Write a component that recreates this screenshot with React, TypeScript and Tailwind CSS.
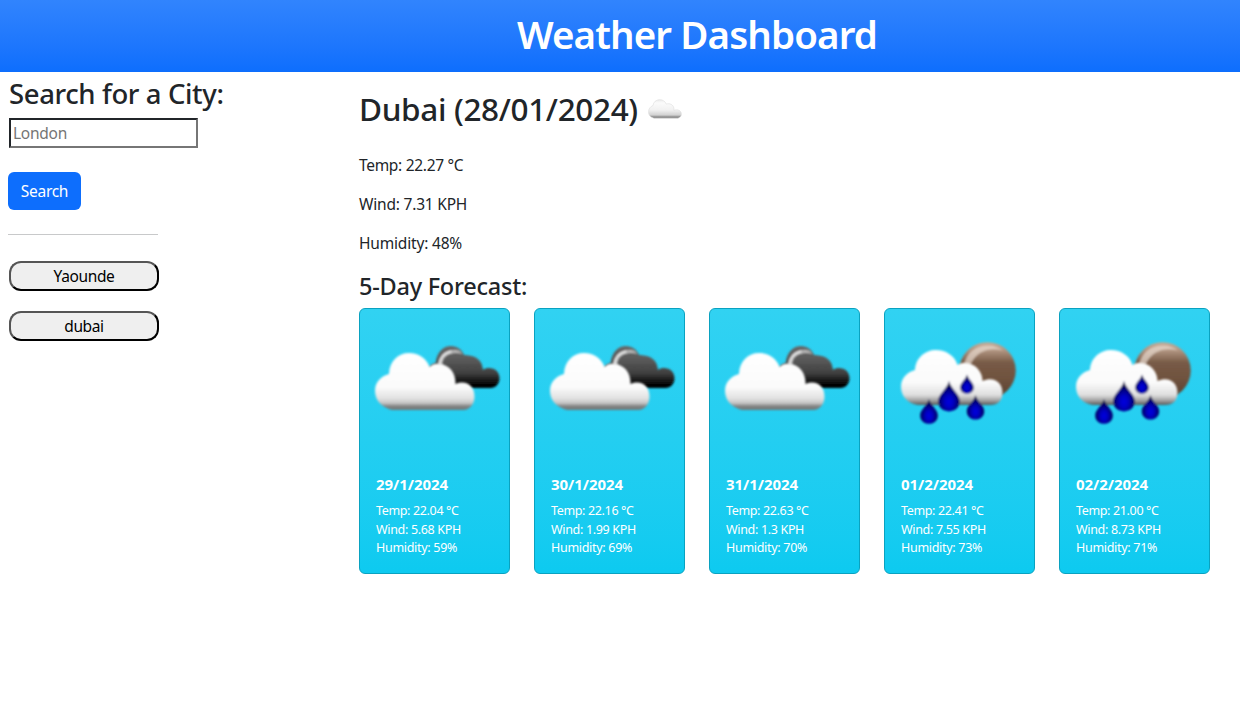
type Sky = "clouds" | "rain";

interface Day {
  date: string;
  sky: Sky;
  temp: string;
  wind: string;
  humidity: string;
}

const days: Day[] = [
  { date: "29/1/2024", sky: "clouds", temp: "22.04", wind: "5.68", humidity: "59" },
  { date: "30/1/2024", sky: "clouds", temp: "22.16", wind: "1.99", humidity: "69" },
  { date: "31/1/2024", sky: "clouds", temp: "22.63", wind: "1.3", humidity: "70" },
  { date: "01/2/2024", sky: "rain", temp: "22.41", wind: "7.55", humidity: "73" },
  { date: "02/2/2024", sky: "rain", temp: "21.00", wind: "8.73", humidity: "71" },
];

const cities = ["Yaounde", "dubai"];

function SmallCloud() {
  return (
    <svg className="ml-[10px] h-[20px] w-[34px]" viewBox="0 0 34 20">
      <defs>
        <linearGradient id="small-cloud" x1="0" y1="0" x2="0" y2="20" gradientUnits="userSpaceOnUse">
          <stop offset="0" stopColor="#e9e9e9" />
          <stop offset="0.2" stopColor="#fbfbfb" />
          <stop offset="0.55" stopColor="#f1f1f1" />
          <stop offset="0.8" stopColor="#d2d2d2" />
          <stop offset="0.9" stopColor="#8b8b8b" />
          <stop offset="1" stopColor="#777777" />
        </linearGradient>
      </defs>
      <path
        d="M6 19.2C2.6 18.5.5 16 .5 13 .5 9.8 2.3 7.5 5 6.5 5.3 3 8.2.7 11.7.7c3.2 0 5.6 1.7 6.5 4.4 3.6-1.2 7 .6 7.7 4 .1.9 0 1.6-.1 2.2 4-1.4 7.6.3 7.600 3.700 0 2.200-1.300 3.600-3.400 4.200Z"
        fill="url(#small-cloud)"
        stroke="#dedede"
        strokeWidth="0.6"
      />
    </svg>
  );
}

function CloudsIcon() {
  return (
    <svg className="h-[150px] w-full" viewBox="0 0 149 150">
      <defs>
        <linearGradient id="dark-cloud" x1="0" y1="37" x2="0" y2="79" gradientUnits="userSpaceOnUse">
          <stop offset="0" stopColor="#686868" />
          <stop offset="0.35" stopColor="#585858" />
          <stop offset="0.65" stopColor="#3f3f3f" />
          <stop offset="0.9" stopColor="#050505" />
          <stop offset="1" stopColor="#000000" />
        </linearGradient>
        <linearGradient id="white-cloud" x1="0" y1="44" x2="0" y2="101" gradientUnits="userSpaceOnUse">
          <stop offset="0" stopColor="#ffffff" />
          <stop offset="0.6" stopColor="#fbfbfb" />
          <stop offset="0.8" stopColor="#e0e0e0" />
          <stop offset="0.88" stopColor="#c4c4c4" />
          <stop offset="0.93" stopColor="#858585" />
          <stop offset="1" stopColor="#6f7577" />
        </linearGradient>
        <filter id="soft-clouds" x="-5%" y="-5%" width="110%" height="110%">
          <feGaussianBlur stdDeviation="0.85" />
        </filter>
      </defs>
      <g filter="url(#soft-clouds)">
        <path
          d="M68 60c2-4 5-5.5 7.500-6C77 43 83 37 91 37c6 0 11 3.500 13 9 8 .5 18 2 19 15 1.500-1.500 4-2 6-2 6 0 10.500 4 10.500 10 0 6-4 10-9 10H90L69 62Z"
          fill="url(#dark-cloud)"
        />
        <path d="M78.500 57c.5-10 8-16.500 17-16 3 0 5 1.500 7 4-8-2.500-16 0-19 5-1.500 3-1.500 6-1 10Z" fill="#b5b5b5" />
        <path d="M79.500 55c1-7 5-11 11-12.500" fill="none" stroke="#ebebeb" strokeWidth="2" strokeLinecap="round" />
      </g>
      <g filter="url(#soft-clouds)">
        <path
          d="M32 101c-9-2-17-9-17-19 0-9 6-15 14-17C29.500 52 38 44 49 44c10 0 18 6 20.500 14 3-3 6-3.500 9-3 10 0 17.500 8 17 20 11-4.500 19 2 19 12.500 0 8-5 13.500-11 13.500Z"
          fill="url(#white-cloud)"
        />
      </g>
    </svg>
  );
}

function Drop({ x, y, scale }: { x: number; y: number; scale: number }) {
  return (
    <path
      transform={`translate(${x} ${y}) scale(${scale})`}
      d="M0 0C2 8 10.500 12.500 10.500 19.500 10.500 25.500 6 29.500 0 29.500S-10.500 25.500-10.500 19.500C-10.500 12.500-2 8 0 0Z"
      fill="url(#drop)"
    />
  );
}

function RainIcon() {
  return (
    <svg className="h-[150px] w-full" viewBox="0 0 149 150">
      <defs>
        <linearGradient id="moon" x1="0" y1="33" x2="0" y2="90" gradientUnits="userSpaceOnUse">
          <stop offset="0" stopColor="#c9ad98" />
          <stop offset="0.15" stopColor="#b09480" />
          <stop offset="0.36" stopColor="#785b47" />
          <stop offset="0.65" stopColor="#6f523e" />
          <stop offset="1" stopColor="#57402f" />
        </linearGradient>
        <linearGradient id="rain-cloud" x1="0" y1="41" x2="0" y2="96" gradientUnits="userSpaceOnUse">
          <stop offset="0" stopColor="#ffffff" />
          <stop offset="0.6" stopColor="#fafafa" />
          <stop offset="0.82" stopColor="#dedede" />
          <stop offset="0.92" stopColor="#a0a0a0" />
          <stop offset="1" stopColor="#555555" />
        </linearGradient>
        <radialGradient id="drop" cx="0.5" cy="0.68" r="0.55">
          <stop offset="0" stopColor="#0000e0" />
          <stop offset="0.35" stopColor="#0000c4" />
          <stop offset="0.75" stopColor="#000078" />
          <stop offset="1" stopColor="#000048" />
        </radialGradient>
        <filter id="soft-rain" x="-5%" y="-5%" width="110%" height="110%">
          <feGaussianBlur stdDeviation="0.85" />
        </filter>
      </defs>
      <g filter="url(#soft-rain)">
        <circle cx="102.5" cy="61.5" r="28.3" fill="url(#moon)" />
        <path d="M79 56C82 43 91 36.500 103 36.500c6 0 11 2 15 5-12-3-26-1-33 15Z" fill="#eadbd0" fillOpacity="0.7" />
      </g>
      <g filter="url(#soft-rain)">
        <path
          d="M33 96c-10-1-17-9-17-18 0-9 6-15 14-17C30.500 49 40 41 51 41c10 0 19 6 21.500 15 3-2 5-2 8-2 9 0 17 8 17 18 11-5 20 1 20 12 0 8-5 12-12 12Z"
          fill="url(#rain-cloud)"
        />
        <Drop x={44} y={90} scale={0.84} />
        <Drop x={64} y={72} scale={1.03} />
        <Drop x={82} y={65.5} scale={0.65} />
        <Drop x={90.5} y={86} scale={0.83} />
      </g>
    </svg>
  );
}

function ForecastCard({ day }: { day: Day }) {
  return (
    <article className="h-[266px] w-[151px] rounded-[6px] border border-[#0aa2c0] bg-linear-to-b from-[#31d2f2] to-[#0dcaf0] text-white">
      {day.sky === "clouds" ? <CloudsIcon /> : <RainIcon />}
      <div className="whitespace-nowrap pl-4 pt-[16px]">
        <h3 className="mb-[8px] text-[15px] font-bold leading-[19px] tracking-[-0.05px]">{day.date}</h3>
        <p className="text-[12.5px] leading-[18.5px] tracking-[-0.35px]">Temp: {day.temp} °C</p>
        <p className="text-[12.5px] leading-[18.5px] tracking-[-0.33px]">Wind: {day.wind} KPH</p>
        <p className="text-[12.5px] leading-[18.5px] tracking-[-0.3px]">Humidity: {day.humidity}%</p>
      </div>
    </article>
  );
}

export default function App() {
  return (
    <div className="h-[703px] overflow-hidden bg-white font-['Noto_Sans','Open_Sans',sans-serif] text-[15.5px] text-[#212529]">
      <header className="flex h-[72px] justify-center bg-linear-to-b from-[#3184fd] to-[#0d6efd] pl-[154px] pt-[10px]">
        <h1 className="whitespace-nowrap text-[38.5px] font-semibold leading-[48px] tracking-[-0.88px] text-white">
          Weather Dashboard
        </h1>
      </header>

      <div className="flex">
        <aside className="w-[359px] shrink-0 pl-2 pt-[5px]">
          <h2 className="ml-px text-[27.5px] font-medium leading-[34px] tracking-[-0.38px]">Search for a City:</h2>
          <input
            type="text"
            placeholder="London"
            className="ml-px mt-[7px] block h-[30px] w-[189px] border-2 border-b-[#767676] border-l-[#212529] border-r-[#767676] border-t-[#212529] px-[2px] tracking-[-0.25px] placeholder:text-[#757575]"
          />
          <button className="mt-6 block h-[38px] w-[73px] rounded-[6px] bg-[#0d6efd] pt-[2px] tracking-[-0.3px] text-white">
            Search
          </button>
          <hr className="mt-6 w-[150px] border-[#c8c9ca]" />
          <div className="ml-px mt-[26px] flex flex-col gap-5">
            {cities.map((city) => (
              <button
                key={city}
                className="h-[30px] w-[150px] rounded-[12px] border-2 border-b-black border-l-[#555555] border-r-black border-t-[#555555] bg-[#efefef] leading-[26px] tracking-[-0.36px] text-black"
              >
                {city}
              </button>
            ))}
          </div>
        </aside>

        <main className="pt-[18px]">
          <div className="flex items-center">
            <h2 className="text-[31.5px] font-medium leading-[38px] tracking-[-0.35px]">Dubai (28/01/2024)</h2>
            <SmallCloud />
          </div>
          <div className="mt-[25px] flex flex-col gap-[15px] leading-6">
            <p className="tracking-[-0.3px]">Temp: 22.27 °C</p>
            <p className="tracking-[-0.2px]">Wind: 7.31 KPH</p>
            <p className="tracking-[-0.18px]">Humidity: 48%</p>
          </div>
          <h3 className="mt-[17px] text-[23.5px] font-medium leading-[29px] tracking-[-0.24px]">5-Day Forecast:</h3>
          <div className="mt-[7px] flex gap-6">
            {days.map((day) => (
              <ForecastCard key={day.date} day={day} />
            ))}
          </div>
        </main>
      </div>
    </div>
  );
}
